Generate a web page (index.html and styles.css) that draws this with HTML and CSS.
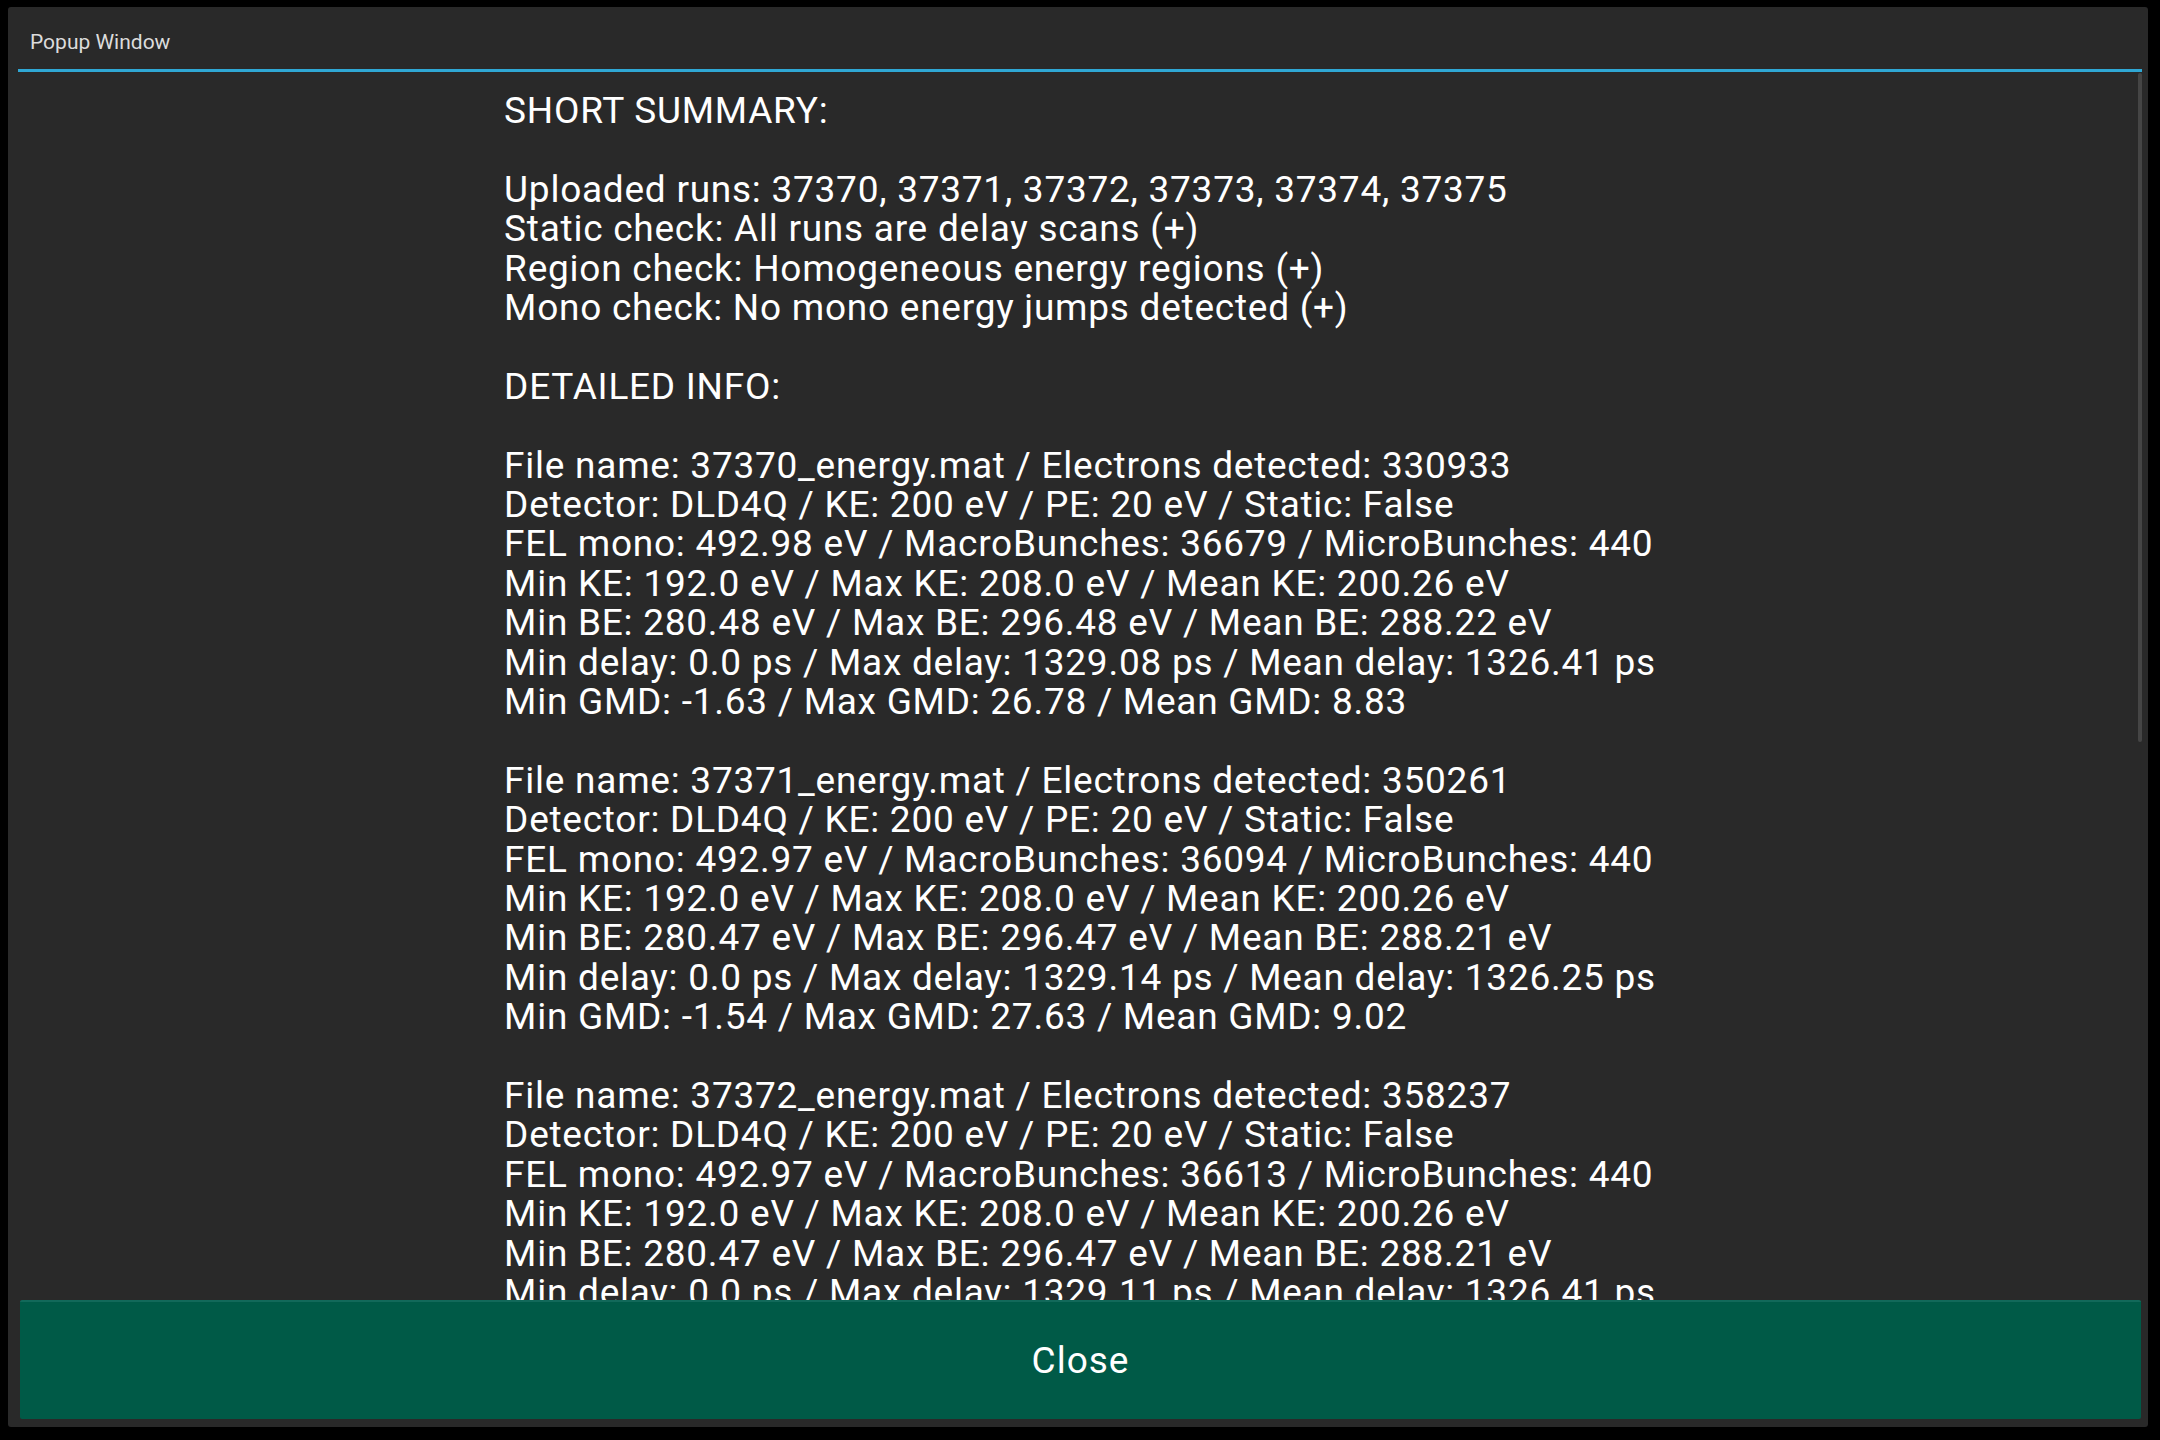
FILE: index.html
```html
<!DOCTYPE html>
<html lang="en">
<head>
<meta charset="utf-8">
<title>Popup Window</title>
<link rel="stylesheet" href="styles.css">
</head>
<body>
<div class="window">
  <div class="title">Popup Window</div>
  <div class="sep"></div>
  <div class="content">
    <div class="report">
      <p class="group"><span class="line">SHORT SUMMARY:</span></p>
      <p class="group">
        <span class="line">Uploaded runs: 37370, 37371, 37372, 37373, 37374, 37375</span>
        <span class="line">Static check: All runs are delay scans (+)</span>
        <span class="line">Region check: Homogeneous energy regions (+)</span>
        <span class="line">Mono check: No mono energy jumps detected (+)</span>
      </p>
      <p class="group"><span class="line">DETAILED INFO:</span></p>
      <p class="group">
        <span class="line">File name: 37370_energy.mat / Electrons detected: 330933</span>
        <span class="line">Detector: DLD4Q / KE: 200 eV / PE: 20 eV / Static: False</span>
        <span class="line">FEL mono: 492.98 eV / MacroBunches: 36679 / MicroBunches: 440</span>
        <span class="line">Min KE: 192.0 eV / Max KE: 208.0 eV / Mean KE: 200.26 eV</span>
        <span class="line">Min BE: 280.48 eV / Max BE: 296.48 eV / Mean BE: 288.22 eV</span>
        <span class="line">Min delay: 0.0 ps / Max delay: 1329.08 ps / Mean delay: 1326.41 ps</span>
        <span class="line">Min GMD: -1.63 / Max GMD: 26.78 / Mean GMD: 8.83</span>
      </p>
      <p class="group">
        <span class="line">File name: 37371_energy.mat / Electrons detected: 350261</span>
        <span class="line">Detector: DLD4Q / KE: 200 eV / PE: 20 eV / Static: False</span>
        <span class="line">FEL mono: 492.97 eV / MacroBunches: 36094 / MicroBunches: 440</span>
        <span class="line">Min KE: 192.0 eV / Max KE: 208.0 eV / Mean KE: 200.26 eV</span>
        <span class="line">Min BE: 280.47 eV / Max BE: 296.47 eV / Mean BE: 288.21 eV</span>
        <span class="line">Min delay: 0.0 ps / Max delay: 1329.14 ps / Mean delay: 1326.25 ps</span>
        <span class="line">Min GMD: -1.54 / Max GMD: 27.63 / Mean GMD: 9.02</span>
      </p>
      <p class="group">
        <span class="line">File name: 37372_energy.mat / Electrons detected: 358237</span>
        <span class="line">Detector: DLD4Q / KE: 200 eV / PE: 20 eV / Static: False</span>
        <span class="line">FEL mono: 492.97 eV / MacroBunches: 36613 / MicroBunches: 440</span>
        <span class="line">Min KE: 192.0 eV / Max KE: 208.0 eV / Mean KE: 200.26 eV</span>
        <span class="line">Min BE: 280.47 eV / Max BE: 296.47 eV / Mean BE: 288.21 eV</span>
        <span class="line">Min delay: 0.0 ps / Max delay: 1329.11 ps / Mean delay: 1326.41 ps</span>
      </p>
    </div>
    <div class="scrollbar"></div>
  </div>
  <button class="close" type="button">Close</button>
</div>
</body>
</html>
```

FILE: styles.css
```css
html, body {
  margin: 0;
  padding: 0;
  background: #000000;
}

body {
  width: 2160px;
  height: 1440px;
  overflow: hidden;
  font-family: Roboto, "Liberation Sans", sans-serif;
}

.window {
  box-sizing: border-box;
  width: 2140px;
  height: 1420px;
  margin: 7px 0 0 8px;
  padding: 0 6px 8px 10px;
  background: #292929;
  border-radius: 3px;
  display: flex;
  flex-direction: column;
}

.title {
  height: 62px;
  flex: none;
  box-sizing: border-box;
  padding: 21px 0 0 12px;
  font-size: 21px;
  line-height: 28px;
  color: #dcdcdc;
}

.sep {
  height: 3px;
  flex: none;
  background: #2fa7d4;
}

.content {
  flex: 1;
  position: relative;
  overflow: hidden;
  display: flex;
  justify-content: center;
  min-height: 0;
}

.report {
  padding-top: 19px;
  color: #ffffff;
  font-size: 37px;
  letter-spacing: 0.75px;
  line-height: 39.4px;
}

.group {
  margin: 0 0 39.4px 0;
}

.line {
  display: block;
  white-space: nowrap;
}

.scrollbar {
  position: absolute;
  top: 1px;
  right: 0;
  width: 4px;
  height: 669px;
  background: #454545;
  border-radius: 2px;
}

.close {
  flex: none;
  height: 119px;
  margin: 0 1px 0 2px;
  padding: 0;
  border: none;
  border-top: 2px solid #12695a;
  border-radius: 2px;
  background: #005a47;
  color: #ffffff;
  font-family: Roboto, "Liberation Sans", sans-serif;
  font-size: 37px;
  letter-spacing: 1px;
}
```
